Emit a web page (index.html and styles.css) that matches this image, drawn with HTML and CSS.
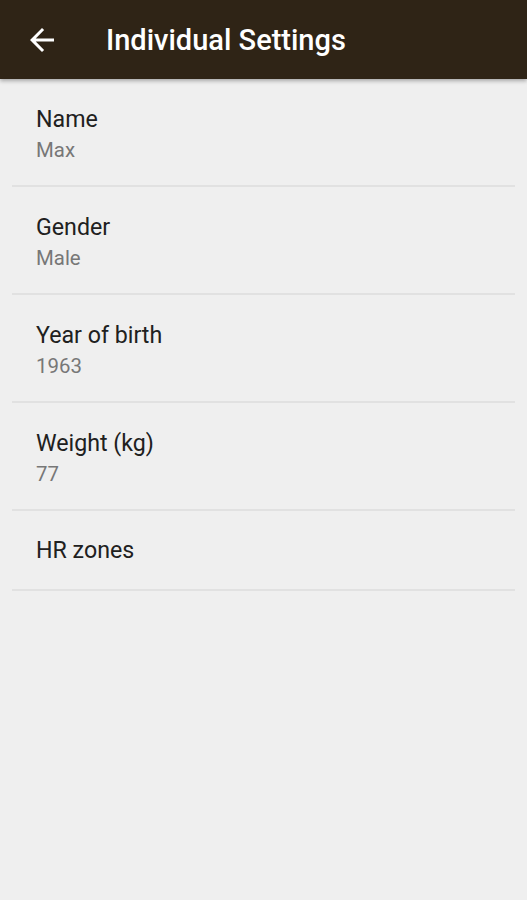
FILE: index.html
```html
<!DOCTYPE html>
<html lang="en">
<head>
<meta charset="utf-8">
<title>Individual Settings</title>
<link rel="stylesheet" href="styles.css">
</head>
<body>
<header class="appbar">
  <svg class="back" viewBox="0 0 24 24" width="36" height="36" aria-hidden="true">
    <path d="M20 11H7.83l5.59-5.59L12 4l-8 8 8 8 1.41-1.41L7.83 13H20v-2z" fill="#ffffff"/>
  </svg>
  <h1 class="title">Individual Settings</h1>
</header>
<main class="list">
  <div class="item">
    <div class="item-title">Name</div>
    <div class="item-sub">Max</div>
  </div>
  <div class="item">
    <div class="item-title">Gender</div>
    <div class="item-sub">Male</div>
  </div>
  <div class="item">
    <div class="item-title">Year of birth</div>
    <div class="item-sub">1963</div>
  </div>
  <div class="item">
    <div class="item-title">Weight (kg)</div>
    <div class="item-sub">77</div>
  </div>
  <div class="item item-single">
    <div class="item-title">HR zones</div>
  </div>
</main>
</body>
</html>
```
FILE: styles.css
```css
html, body {
  margin: 0;
  padding: 0;
  height: 100%;
}
body {
  background: #efefef;
  font-family: Roboto, "Noto Sans", "Liberation Sans", sans-serif;
}
.appbar {
  height: 79px;
  background: #2f2416;
  display: flex;
  align-items: center;
  padding-left: 24px;
  box-shadow: 0 2px 4px rgba(0, 0, 0, 0.3);
  position: relative;
}
.back {
  display: block;
  flex: none;
}
.title {
  margin: 0 0 0 46px;
  color: #ffffff;
  font-size: 29px;
  font-weight: 500;
  line-height: 34px;
}
.list {
  display: flex;
  flex-direction: column;
}
.item {
  margin: 0 12px;
  padding: 27px 0 23px 24px;
  border-bottom: 2px solid #e1e1e1;
  display: flex;
  flex-direction: column;
  gap: 6px;
}
.item-single {
  padding-top: 26px;
  padding-bottom: 25px;
}
.item-title {
  font-size: 23.2px;
  line-height: 27px;
  color: #202020;
}
.item-sub {
  font-size: 20.4px;
  line-height: 23px;
  color: #777777;
}
```
